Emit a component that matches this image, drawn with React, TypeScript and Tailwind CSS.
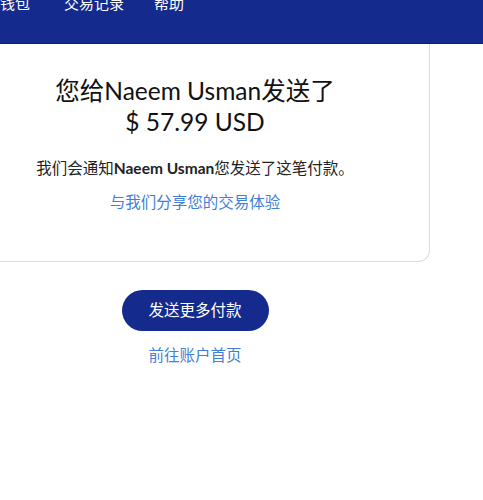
import React from 'react';

const font = { fontFamily: 'Lato, "Noto Sans CJK SC", sans-serif' };

export default function App() {
  return (
    <div className="min-h-[500px] w-[483px] overflow-hidden bg-white" style={font}>
      <header className="h-[44px] bg-[#142a8c] border-b border-[#0d1f6e] overflow-hidden">
        <nav className="flex -mt-[8px] text-[15px] text-white">
          <span className="w-[64px]">钱包</span>
          <span className="w-[90px]">交易记录</span>
          <span>帮助</span>
        </nav>
      </header>

      <main className="-ml-[40px] w-[470px] flex flex-col items-center">
        <section className="w-full h-[218px] bg-white border border-t-0 border-[#dcdcdc] rounded-b-[12px] flex flex-col items-center pt-[31px]">
          <h1 className="text-[24.5px] leading-[31px] text-[#111] text-center">
            您给Naeem Usman发送了
            <br />$ 57.99 USD
          </h1>
          <p className="mt-[20px] text-[15.5px] text-[#222]">
            我们会通知<span className="font-bold">Naeem Usman</span>您发送了这笔付款。
          </p>
          <a className="mt-[11px] text-[15.5px] text-[#3f7fd6]">与我们分享您的交易体验</a>
        </section>

        <button className="mt-[28px] h-[41px] w-[147px] rounded-full bg-[#142a8c] text-white text-[15.5px]">
          发送更多付款
        </button>
        <a className="mt-[13px] text-[15.5px] text-[#3f7fd6]">前往账户首页</a>
      </main>
    </div>
  );
}
